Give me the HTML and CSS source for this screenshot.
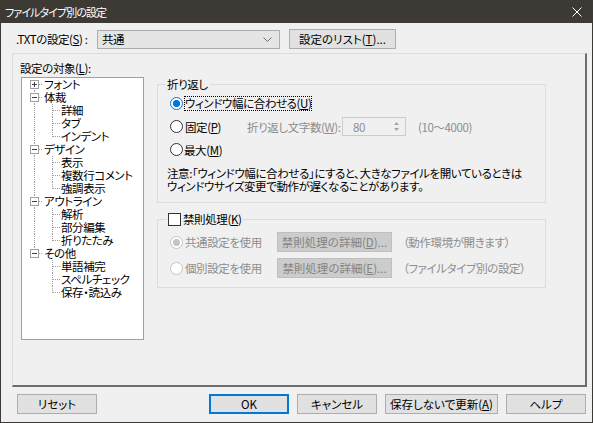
FILE: index.html
```html
<!DOCTYPE html>
<html lang="ja">
<head>
  <meta charset="UTF-8" />
  <title>ファイルタイプ別の設定</title>
  <link rel="stylesheet" href="styles.css">
</head>
<body>
<div class="window">

  <div class="titlebar">
    <span class="title">ファイルタイプ別の設定</span>
    <span class="close">
      <svg width="10" height="10" viewBox="0 0 10 10"><path d="M0.5 0.5L9.5 9.5M9.5 0.5L0.5 9.5" stroke="#fff" stroke-width="1" fill="none"/></svg>
    </span>
  </div>

  <div class="top-row">
    <span class="type-label">.TXTの設定(<u>S</u>) :</span>
    <div class="combo">
      <span>共通</span>
      <svg width="9" height="5" viewBox="0 0 9 5"><path d="M0.5 0.5L4.5 4.5L8.5 0.5" stroke="#707070" fill="none"/></svg>
    </div>
    <button class="btn list-btn">設定のリスト(<u>T</u>)...</button>
  </div>

  <div class="panel">
    <div class="left-col">
      <div class="tree-label">設定の対象(<u>L</u>):</div>
      <div class="tree">
        <div class="n r first"><span class="exp plus"></span>フォント</div>
        <div class="n r"><span class="exp"></span>体裁</div>
        <div class="n k">詳細</div>
        <div class="n k">タブ</div>
        <div class="n k last">インデント</div>
        <div class="n r"><span class="exp"></span>デザイン</div>
        <div class="n k">表示</div>
        <div class="n k">複数行コメント</div>
        <div class="n k last">強調表示</div>
        <div class="n r"><span class="exp"></span>アウトライン</div>
        <div class="n k">解析</div>
        <div class="n k">部分編集</div>
        <div class="n k last">折りたたみ</div>
        <div class="n r last"><span class="exp"></span>その他</div>
        <div class="n k end">単語補完</div>
        <div class="n k end">スペルチェック</div>
        <div class="n k end last">保存・読込み</div>
      </div>
    </div>

    <div class="right-col">
      <div class="group wrap-group">
        <div class="group-title">折り返し</div>
        <div class="opt-row">
          <span class="radio checked"></span>
          <span class="focus">ウィンドウ幅に合わせる(<u>U</u>)</span>
        </div>
        <div class="opt-row">
          <span class="radio"></span>
          <span class="fixed-label">固定(<u>P</u>)</span>
          <span class="disabled chars-label">折り返し文字数(<u>W</u>):</span>
          <div class="spin">
            <span>80</span>
            <svg width="7" height="13" viewBox="0 0 7 13"><path d="M3.5 2L6 5H1Z M3.5 11L6 8H1Z" fill="#a6a6a6"/></svg>
          </div>
          <span class="disabled">(10～4000)</span>
        </div>
        <div class="opt-row">
          <span class="radio"></span>
          <span>最大(<u>M</u>)</span>
        </div>
        <p class="note">注意:「ウィンドウ幅に合わせる」にすると、大きなファイルを開いているときは<br>ウィンドウサイズ変更で動作が遅くなることがあります。</p>
      </div>

      <div class="group kinsoku-group">
        <div class="group-title"><span class="check"></span>禁則処理(<u>K</u>)</div>
        <div class="opt-row tall">
          <span class="radio off checked"></span>
          <span class="disabled use-label">共通設定を使用</span>
          <button class="btn off detail-btn">禁則処理の詳細(<u>D</u>)...</button>
          <span class="disabled">（動作環境が開きます）</span>
        </div>
        <div class="opt-row tall">
          <span class="radio off"></span>
          <span class="disabled use-label">個別設定を使用</span>
          <button class="btn off detail-btn">禁則処理の詳細(<u>E</u>)...</button>
          <span class="disabled">（ファイルタイプ別の設定）</span>
        </div>
      </div>
    </div>
  </div>

  <div class="footer">
    <button class="btn">リセット</button>
    <button class="btn default push">OK</button>
    <button class="btn">キャンセル</button>
    <button class="btn wide">保存しないで更新(<u>A</u>)</button>
    <button class="btn">ヘルプ</button>
  </div>

</div>
</body>
</html>
```

FILE: styles.css
```css
* {
  box-sizing: border-box;
}
body {
  margin: 0;
  font-family: "Noto Sans CJK JP", "Noto Sans", sans-serif;
  font-size: 11.5px;
  font-feature-settings: "palt";
  letter-spacing: -0.4px;
  color: #000;
  background: #f0f0f0;
}
u {
  text-decoration-thickness: 1px;
  text-underline-offset: 1px;
}

.window {
  width: 593px;
  height: 423px;
  display: flex;
  flex-direction: column;
  border: 1px solid #3d3935;
  border-top: 0;
  background: #f0f0f0;
}

/* title bar */
.titlebar {
  height: 23px;
  flex: none;
  background: #3d3935;
  color: #fff;
  font-size: 11px;
  letter-spacing: -0.9px;
  display: flex;
  align-items: center;
  justify-content: space-between;
  padding: 0 10px 0 4px;
}
.close {
  display: flex;
}

/* top row */
.top-row {
  display: flex;
  align-items: center;
  height: 20px;
  flex: none;
  margin-top: 6px;
  padding-left: 15px;
}
.type-label {
  width: 81px;
}
.combo {
  width: 183px;
  height: 19px;
  border: 1px solid #adadad;
  background: #e5e5e5;
  display: flex;
  align-items: center;
  justify-content: space-between;
  padding: 0 7px 0 4px;
}
.btn {
  font: inherit;
  color: #000;
  height: 20px;
  width: 80px;
  padding: 0;
  border: 1px solid #adadad;
  background: #e1e1e1;
  line-height: 18px;
}
.list-btn {
  width: 107px;
  margin-left: 9px;
}

/* main panel */
.panel {
  flex: 1;
  display: flex;
  margin: 4px 5px 0 11px;
  border-top: 1px solid #dcdcdc;
  border-left: 1px solid #dcdcdc;
  border-right: 2px solid #6d6d6d;
  border-bottom: 2px solid #6d6d6d;
}
.left-col {
  width: 131px;
  padding: 7px 0 0 7px;
}
.tree-label {
  height: 16px;
  line-height: 14px;
}
.tree {
  margin-left: 1px;
  width: 123px;
  height: 263px;
  background: #fff;
  border: 1px solid #a0a0a0;
  overflow: hidden;
}

/* tree rows with dotted connector lines */
.n {
  height: 13px;
  line-height: 13px;
  white-space: nowrap;
  background-repeat: no-repeat;
}
.r {
  padding-left: 8px;
  background-image:
    repeating-linear-gradient(to right, #a0a0a0 0 1px, transparent 1px 2px),
    repeating-linear-gradient(#a0a0a0 0 1px, transparent 1px 2px);
  background-position: 17px 6px, 12px 0;
  background-size: 4px 1px, 1px 13px;
}
.r.first {
  background-position: 17px 6px, 12px 6px;
  background-size: 4px 1px, 1px 7px;
}
.r.last {
  background-size: 4px 1px, 1px 7px;
}
.k {
  padding-left: 39px;
  background-image:
    repeating-linear-gradient(to right, #a0a0a0 0 1px, transparent 1px 2px),
    repeating-linear-gradient(#a0a0a0 0 1px, transparent 1px 2px),
    repeating-linear-gradient(#a0a0a0 0 1px, transparent 1px 2px);
  background-position: 31px 6px, 30px 0, 12px 0;
  background-size: 7px 1px, 1px 13px, 1px 13px;
}
.k.last {
  background-size: 7px 1px, 1px 7px, 1px 13px;
}
.k.end {
  background-size: 7px 1px, 1px 13px, 0 0;
}
.k.end.last {
  background-size: 7px 1px, 1px 7px, 0 0;
}
.exp {
  display: inline-block;
  vertical-align: top;
  width: 9px;
  height: 9px;
  margin: 2px 5px 0 0;
  border: 1px solid #a0a0a0;
  background: linear-gradient(#404040, #404040) center / 5px 1px no-repeat, #fff;
}
.exp.plus {
  background:
    linear-gradient(#404040, #404040) center / 5px 1px no-repeat,
    linear-gradient(#404040, #404040) center / 1px 5px no-repeat,
    #fff;
}

/* right column */
.right-col {
  width: 389px;
  margin-left: 13px;
  padding-top: 30px;
}
.group {
  border: 1px solid #dcdcdc;
}
.group-title {
  display: flex;
  align-items: center;
  width: max-content;
  height: 14px;
  line-height: 14px;
  margin: -8px 0 0 8px;
  padding: 0 2px 0 1px;
  background: #f0f0f0;
}
.wrap-group {
  padding-bottom: 9px;
}
.wrap-group .group-title {
  margin-bottom: 1px;
}
.opt-row {
  display: flex;
  align-items: center;
  height: 23px;
  padding-left: 12px;
  white-space: nowrap;
}
.opt-row.tall {
  height: 26px;
}
.radio {
  width: 13px;
  height: 13px;
  flex: none;
  margin-right: 1px;
  border-radius: 50%;
  border: 1px solid #333;
  background: #fff;
}
.radio.checked {
  border-color: #0078d7;
  background: radial-gradient(circle, #0078d7 0 3.3px, #fff 3.9px);
}
.radio.off {
  border-color: #c4c4c4;
}
.radio.off.checked {
  background: radial-gradient(circle, #c4c4c4 0 3.3px, #fff 3.9px);
}
.focus {
  outline: 1px dotted #000;
  outline-offset: -1px;
  padding: 0 1px;
  line-height: 15px;
}
.fixed-label {
  width: 63px;
  padding-left: 1px;
}
.disabled {
  color: #8d8d8d;
}
.chars-label {
  width: 95px;
}
.spin {
  width: 64px;
  height: 19px;
  margin-right: 12px;
  border: 1px solid #cccccc;
  background: #f0f0f0;
  color: #8d8d8d;
  display: flex;
  align-items: center;
  justify-content: space-between;
  padding: 0 5px 0 10px;
}
.note {
  margin: 6px 0 0 9px;
  line-height: 13px;
  white-space: nowrap;
}

.kinsoku-group {
  margin-top: 16px;
  padding: 4px 0 6px;
}
.kinsoku-group .group-title {
  margin: -12px 0 3px 9px;
  padding-left: 1px;
}
.check {
  width: 13px;
  height: 13px;
  margin-right: 2px;
  border: 1px solid #333;
  background: #fff;
}
.use-label {
  width: 93px;
  padding-left: 1px;
}
.btn.off {
  background: #cccccc;
  border-color: #bfbfbf;
  color: #838383;
}
.detail-btn {
  width: 115px;
  margin-right: 11px;
}

/* footer buttons */
.footer {
  display: flex;
  gap: 8px;
  flex: none;
  height: 35px;
  padding: 7px 6px 0 16px;
}
.push {
  margin-left: auto;
}
.btn.default {
  border-color: #0078d7;
  box-shadow: inset 0 0 0 1px #0078d7;
}
.btn.wide {
  width: 113px;
}
```
